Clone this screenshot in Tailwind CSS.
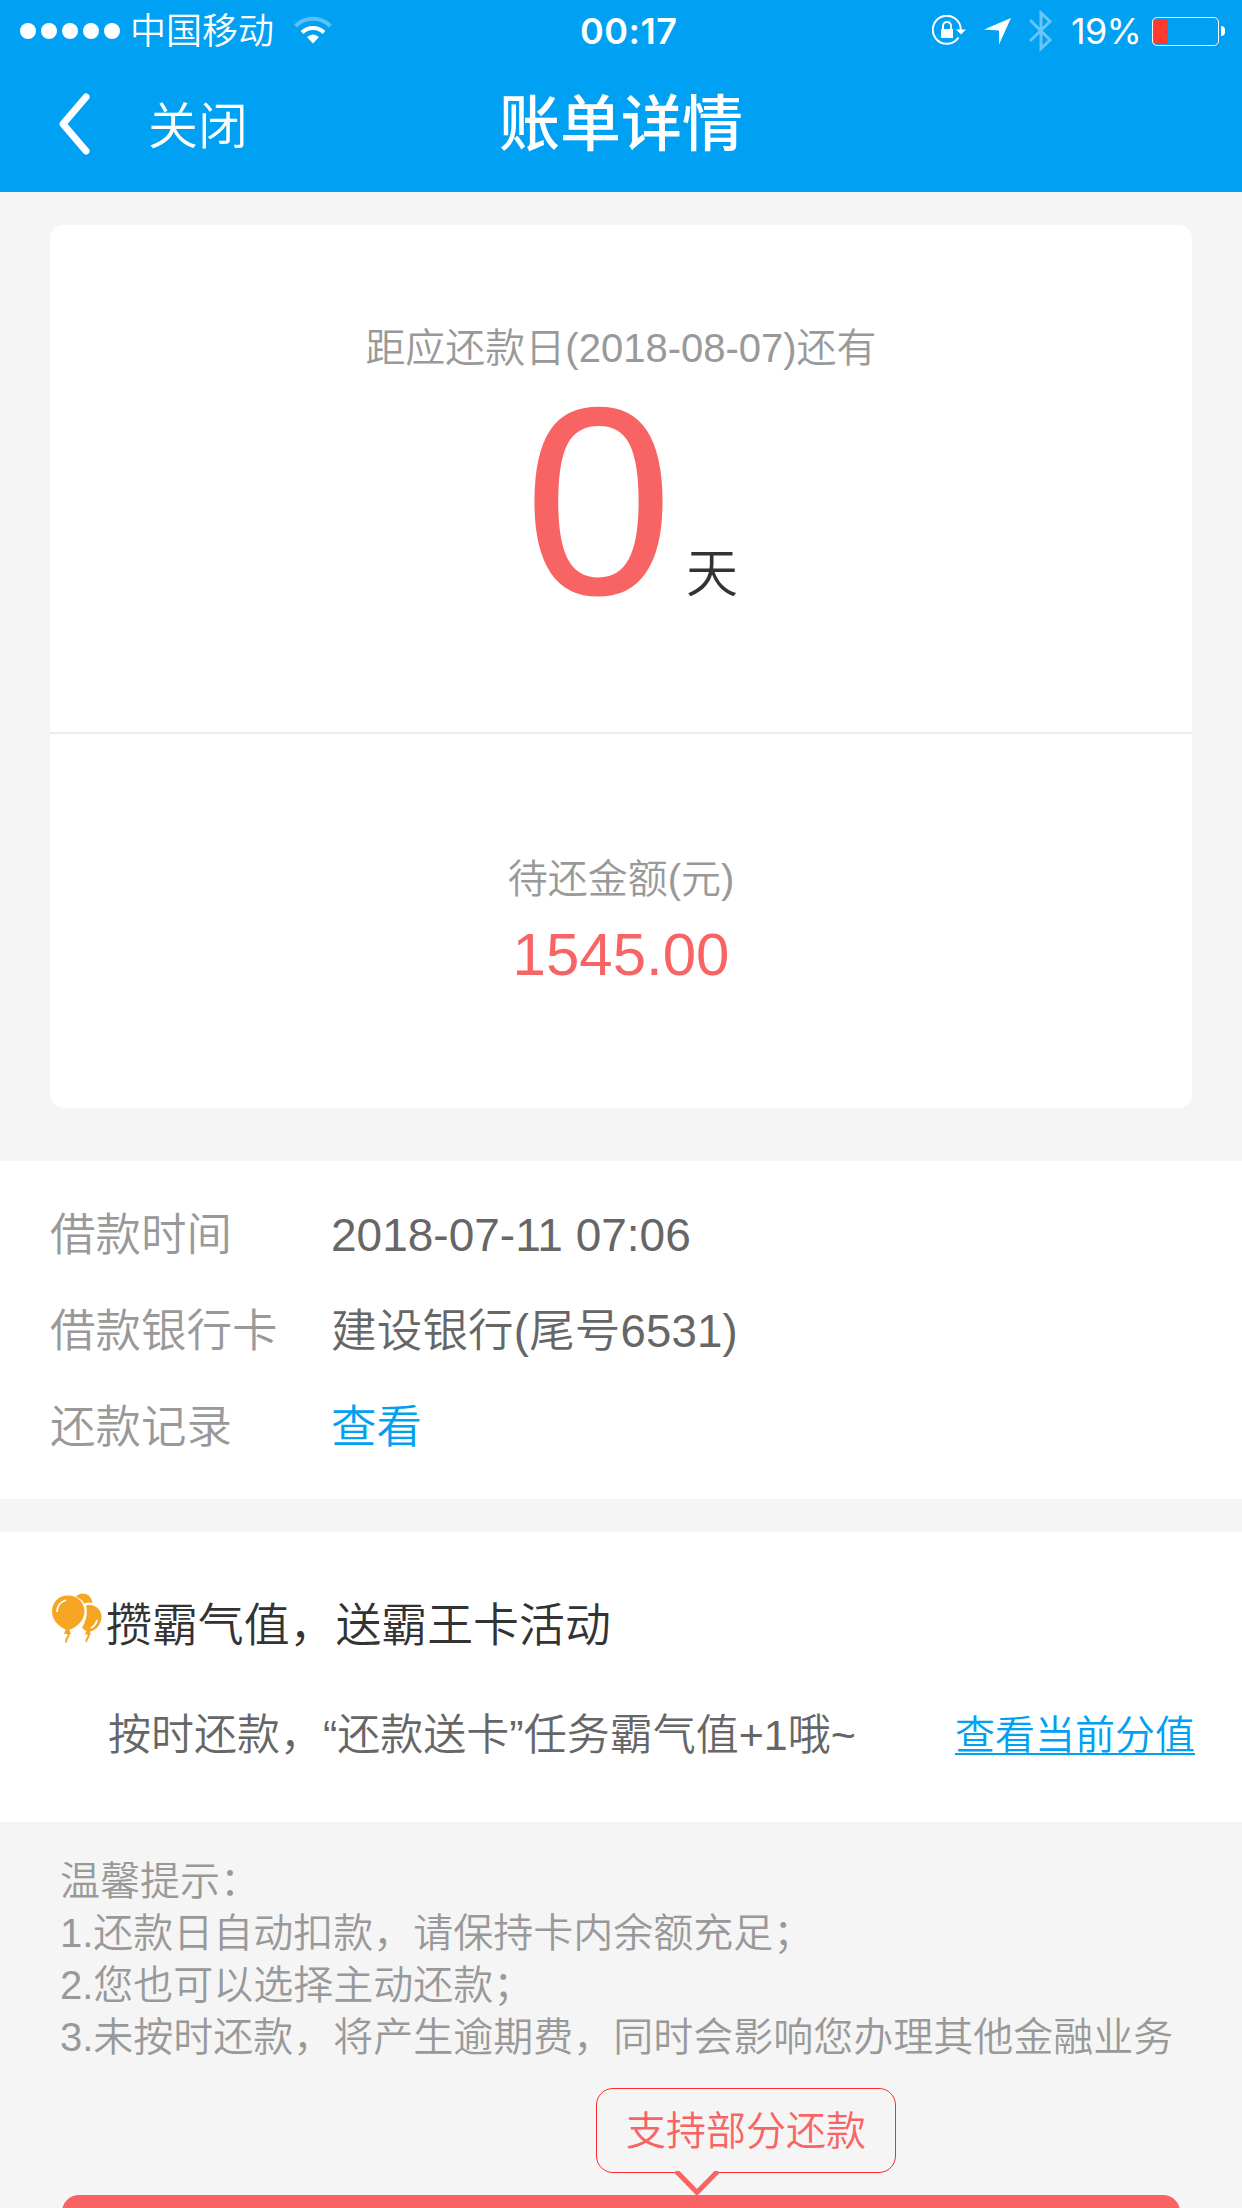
<!DOCTYPE html>
<html lang="zh-CN">
<head>
    <meta charset="UTF-8">
    <meta name="viewport" content="width=device-width, initial-scale=1.0">
    <title>账单详情</title>
    <script src="https://cdn.jsdelivr.net/npm/@tailwindcss/browser@4"></script>
</head>
<body class="bg-[#f5f5f5] w-[1242px] h-[2208px] overflow-hidden font-['Liberation_Sans','Noto_Sans_CJK_SC',sans-serif] font-[350]">

    <!-- Header -->
    <header class="h-[192px] bg-[#00a0f2] text-white">
        <!-- Status Bar -->
        <div class="h-[62px] flex items-center justify-between pl-5 pr-[17px] relative">
            <div class="flex items-center">
                <div class="flex gap-[5px]">
                    <span class="size-4 rounded-full bg-white"></span>
                    <span class="size-4 rounded-full bg-white"></span>
                    <span class="size-4 rounded-full bg-white"></span>
                    <span class="size-4 rounded-full bg-white"></span>
                    <span class="size-4 rounded-full bg-white"></span>
                </div>
                <span class="ml-[10px] mt-[2px] text-[36px] leading-none">中国移动</span>
                <svg class="ml-[20px] mt-[-2px]" width="38" height="28" viewBox="0 0 38 28" fill="none">
                    <path d="M1.500 10a25 25 0 0 1 35 0" stroke="#fff" stroke-opacity=".35" stroke-width="4"/>
                    <path d="M8 16.500a16 16 0 0 1 22 0" stroke="#fff" stroke-width="4"/>
                    <path d="M13 21q6-5 12 0l-6 6.500z" fill="#fff"/>
                </svg>
            </div>
            <span class="absolute left-[580px] top-0 leading-[62px] text-[36px] tracking-[0.5px] font-semibold font-['Inter',sans-serif]">00:17</span>
            <div class="flex items-center">
                <svg width="34" height="32" viewBox="0 0 34 32" fill="none">
                    <path d="M28.800 15A14 14 0 1 0 26.500 22.500" stroke="#fff" stroke-width="2"/>
                    <path d="M24 14.500h10l-5 5z" fill="#fff"/>
                    <path d="M9 14h12v9H9z" fill="#fff"/>
                    <path d="M11 14v-3a4 4 0 0 1 8 0v3" stroke="#fff" stroke-width="2"/>
                </svg>
                <svg class="ml-[18px]" width="28" height="28" viewBox="0 0 28 28"><path d="M0 12.500 27 1 15 27.500V13.500z" fill="#fff"/></svg>
                <svg class="ml-[17px]" width="24" height="42" viewBox="0 0 24 42" fill="none"><path d="M1 10l20 20-9 8.500V3l9 8.500L1 31" stroke="#fff" stroke-opacity=".4" stroke-width="3"/></svg>
                <span class="ml-[18px] text-[36px] leading-none font-['Inter',sans-serif] font-normal tracking-[-0.8px]">19%</span>
                <div class="ml-[11px] w-[67px] h-[29px] border border-white rounded-[5px] p-px">
                    <div class="w-[14px] h-full bg-[#ff3b30] rounded-l-[3px]"></div>
                </div>
                <span class="ml-[2px] w-1 h-[10px] bg-white rounded-r-full"></span>
            </div>
        </div>
        <!-- Nav Bar -->
        <div class="h-[126px] relative flex items-center pl-[59px]">
            <svg class="-mt-[3px]" width="31" height="62" viewBox="0 0 31 62" fill="none"><path d="M27 4 4 31l23 27" stroke="#fff" stroke-width="7" stroke-linecap="round" stroke-linejoin="round"/></svg>
            <span class="ml-[58px] mt-[4px] text-[50px] leading-none">关闭</span>
            <h1 class="absolute inset-x-0 top-0 text-center text-[61px] leading-[126px] font-medium">账单详情</h1>
        </div>
    </header>

    <!-- Bill Card -->
    <section class="mx-[50px] mt-[33px] h-[883px] bg-white rounded-[14px] text-center">
        <div class="h-[509px] border-b-2 border-[#ececec] pt-[93px]">
            <p class="text-[40px] leading-[60px] text-[#999]">距应还款日(2018-08-07)还有</p>
            <div class="flex justify-center items-baseline pl-[20px] leading-[246px] text-[#333]">
                <span class="text-[268px] text-[#f86464]">0</span>
                <span class="ml-[13px] relative -top-[2px] text-[52px]">天</span>
            </div>
        </div>
        <div class="pt-[115px]">
            <p class="text-[40px] leading-[60px] text-[#999]">待还金额(元)</p>
            <p class="mt-[11px] text-[60px] leading-[70px] text-[#f86464]">1545.00</p>
        </div>
    </section>

    <!-- Loan Info -->
    <section class="mt-[53px] h-[338px] bg-white pl-[50px] pt-[27px] text-[45.500px] leading-[96px] text-[#666]">
        <div class="flex"><span class="w-[281px] text-[#999]">借款时间</span><span class="-mt-px text-[46px]">2018-07-11 07:06</span></div>
        <div class="flex"><span class="w-[281px] text-[#999]">借款银行卡</span><span class="tracking-[0.2px]">建设银行(尾号6531)</span></div>
        <div class="flex"><span class="w-[281px] text-[#999]">还款记录</span><a class="text-[#00a0f2]">查看</a></div>
    </section>

    <!-- Activity -->
    <section class="mt-[33px] h-[290px] bg-white pt-[56px]">
        <div class="flex items-start h-[70px] pl-[52px]">
            <svg class="mt-[4px]" width="50" height="51" viewBox="0 0 50 51" fill="none">
                <path d="M24 4.500C29-1 39 1 40.500 11q-4-1-8 .5Q29.500 7 24 4.500z" fill="#f6a623"/>
                <path d="M34 13.500c8-2.500 15.500 3.500 15.500 11.500 0 7-5 13-12 15-3-.5-5.500-2-7.500-4.500 4-6 6-14 4-22z" fill="#f6a623"/>
                <path d="M16 3.500C6 3.500 0 11 0 19.500c0 9 8 17 16 18.500 8-1.500 16.500-9.500 16.500-18.500C32.500 11 26 3.500 16 3.500z" fill="#f6a623"/>
                <path d="M14 37l-2 5h7l-2-5zM35 38l-2 4.500h6L37 38z" fill="#f6a623"/>
                <path d="M16 41c3 4-4 5-1.500 9.500M36 41.500c3 3-3 5-1.500 8.500" stroke="#f6a623" stroke-width="2"/>
                <path d="M5 20q0-9 9-12M45 28q-1 5-6 8" stroke="#fff" stroke-width="1.800"/>
            </svg>
            <span class="ml-[4px] text-[45.900px] leading-[74px] text-[#333]">攒霸气值，送霸王卡活动</span>
        </div>
        <div class="mt-[42px] flex items-center justify-between h-[66px] pl-[108px] pr-[47px]">
            <span class="mt-[5px] text-[43px] text-[#666]">按时还款，“还款送卡”任务霸气值+1哦~</span>
            <a class="mt-[3px] text-[40px] text-[#00a0f2] underline decoration-[2px] underline-offset-[4px]">查看当前分值</a>
        </div>
    </section>

    <!-- Tips -->
    <section class="h-[266px] pt-[33px] pl-[60px] text-[40px] leading-[52px] text-[#999] whitespace-nowrap">
        <p>温馨提示：</p>
        <p>1.还款日自动扣款，请保持卡内余额充足；</p>
        <p>2.您也可以选择主动还款；</p>
        <p>3.未按时还款，将产生逾期费，同时会影响您办理其他金融业务</p>
    </section>

    <!-- Repay Button with Bubble -->
    <div class="relative ml-[596px] w-[300px] h-[85px] border border-[#ff2a2a] rounded-[17px] text-center text-[40px] leading-[85px] text-[#f86464]">
        支持部分还款
        <svg class="absolute left-[76px] top-[82px]" width="48" height="26" viewBox="0 0 48 26"><path d="M3 0l21 21.500L45 0" fill="#f5f5f5" stroke="#f86464" stroke-width="5"/></svg>
    </div>
    <div class="mt-[22px] mx-[62px] h-[120px] bg-[#f86464] rounded-[17px]"></div>

</body>
</html>
